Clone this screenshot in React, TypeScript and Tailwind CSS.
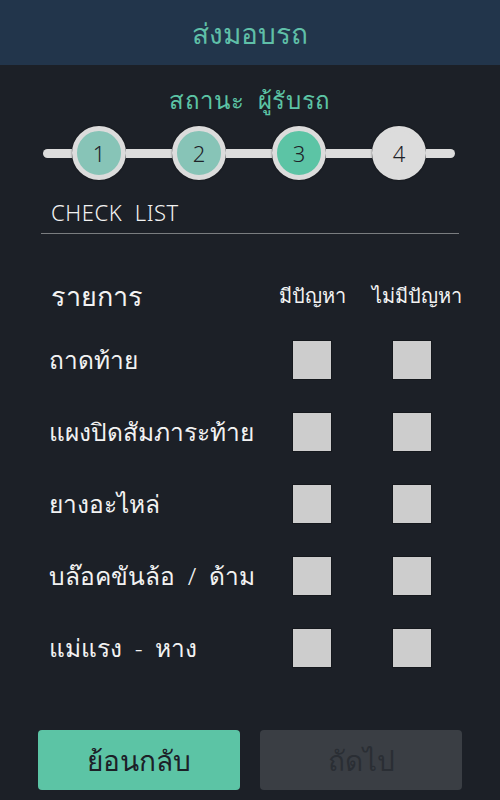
import React from 'react';

const font = { fontFamily: '"Noto Sans", "DejaVu Sans", sans-serif' };

const items = [
  'ถาดท้าย',
  'แผงปิดสัมภาระท้าย',
  'ยางอะไหล่',
  'บล๊อคขันล้อ\u00a0 /\u00a0 ด้าม',
  'แม่แรง\u00a0 -\u00a0 หาง',
];

const steps = [
  { n: 1, fill: 'bg-[#87c4b7]' },
  { n: 2, fill: 'bg-[#87c4b7]' },
  { n: 3, fill: 'bg-[#5cc4a5]' },
  { n: 4, fill: 'bg-[#dcdcdc]' },
];

function Step({ n, fill }: { n: number; fill: string }) {
  return (
    <div
      className={`w-[54px] h-[54px] shrink-0 rounded-full border-[5px] border-[#dcdcdc] ${fill} flex items-center justify-center text-[22px] font-light text-[#1e2228] shadow-[0_0_2px_rgba(0,0,0,0.6)]`}
    >
      {n}
    </div>
  );
}

function Box() {
  return <div className="w-[40px] h-[40px] bg-[#cdcdcd] border border-[#15181d]" />;
}

export default function App() {
  return (
    <div className="w-[500px] h-[800px] bg-[#1c2027] flex flex-col text-[#f2f2f2] font-light" style={font}>
      {/* Header */}
      <div className="h-[65px] bg-[#22354b] flex items-center justify-center">
        <span className="text-[28px] text-[#5fbfa8]">ส่งมอบรถ</span>
      </div>

      {/* Status */}
      <div className="mt-[18px] h-[34px] flex items-center justify-center text-[24px] text-[#5cc4a5] tracking-wide">
        สถานะ&nbsp; ผู้รับรถ
      </div>

      {/* Steps */}
      <div className="mt-[9px] pl-[43px] flex items-center">
        <div className="w-[29px] h-[9px] bg-[#dcdcdc] rounded-l-full" />
        {steps.map((s, i) => (
          <React.Fragment key={s.n}>
            <Step n={s.n} fill={s.fill} />
            {i < steps.length - 1 && <div className="w-[46px] h-[9px] bg-[#dcdcdc]" />}
          </React.Fragment>
        ))}
        <div className="w-[29px] h-[9px] bg-[#dcdcdc] rounded-r-full" />
      </div>

      {/* Check list title */}
      <div className="mt-[17px] pl-[51px] h-[30px] flex items-center text-[22px] tracking-wide">
        CHECK&nbsp; LIST
      </div>
      <div className="mt-[6px] mx-[41px] h-px bg-[#7a7d80]" />

      {/* Table */}
      <div className="pl-[49px] pr-[38px] mt-[42px]">
        <div className="grid grid-cols-[1fr_100px_100px] items-center h-[36px]">
          <span className="text-[27px] pl-[2px]">รายการ</span>
          <span className="justify-self-center text-[20px] whitespace-nowrap">มีปัญหา</span>
          <span className="justify-self-center text-[20px] pl-[10px] whitespace-nowrap">ไม่มีปัญหา</span>
        </div>
        <div className="mt-[28px] flex flex-col gap-[32px]">
          {items.map((it) => (
            <div key={it} className="grid grid-cols-[1fr_100px_100px] items-center h-[40px]">
              <span className="text-[24.5px] whitespace-nowrap">{it}</span>
              <div className="justify-self-center">
                <Box />
              </div>
              <div className="justify-self-center">
                <Box />
              </div>
            </div>
          ))}
        </div>
      </div>

      {/* Buttons */}
      <div className="mt-auto mb-[10px] px-[38px] flex gap-[20px]">
        <button className="flex-1 h-[60px] rounded-[4px] bg-[#5cc4a5] text-[28px] text-[#1c2027]">ย้อนกลับ</button>
        <button className="flex-1 h-[60px] rounded-[4px] bg-[#3a3e44] text-[28px] text-[#2a2e34]">ถัดไป</button>
      </div>
    </div>
  );
}
